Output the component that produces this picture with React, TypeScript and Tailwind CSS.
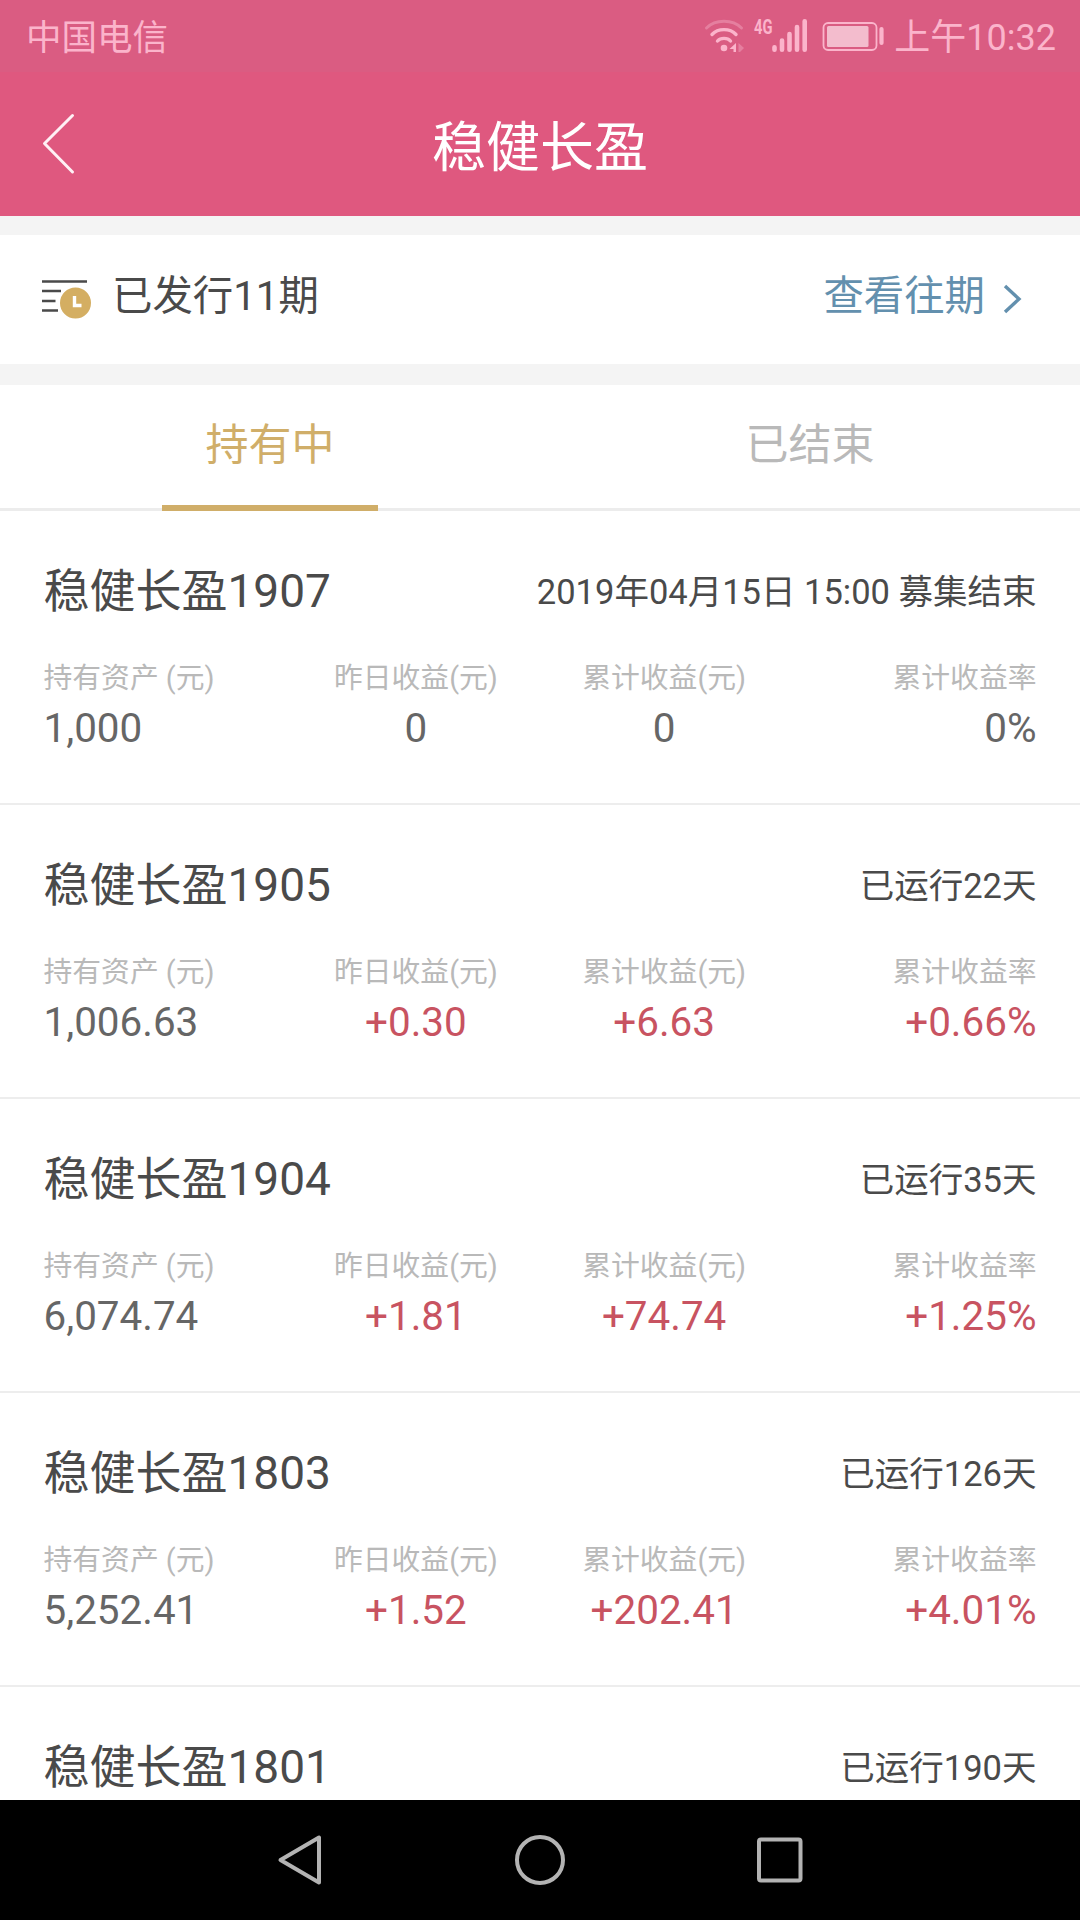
import { clsx } from 'clsx';

interface Holding {
  name: string;
  status: string;
  stats?: {
    assets: string;
    yesterday: string;
    total: string;
    rate: string;
  };
}

const holdings: Holding[] = [
  {
    name: '稳健长盈1907',
    status: '2019年04月15日 15:00 募集结束',
    stats: { assets: '1,000', yesterday: '0', total: '0', rate: '0%' },
  },
  {
    name: '稳健长盈1905',
    status: '已运行22天',
    stats: { assets: '1,006.63', yesterday: '+0.30', total: '+6.63', rate: '+0.66%' },
  },
  {
    name: '稳健长盈1904',
    status: '已运行35天',
    stats: { assets: '6,074.74', yesterday: '+1.81', total: '+74.74', rate: '+1.25%' },
  },
  {
    name: '稳健长盈1803',
    status: '已运行126天',
    stats: { assets: '5,252.41', yesterday: '+1.52', total: '+202.41', rate: '+4.01%' },
  },
  { name: '稳健长盈1801', status: '已运行190天' },
];

function StatusBar() {
  return (
    <div className="flex h-[72px] items-center justify-between bg-[#da5c82] pr-6 pl-[26px] text-[36px] leading-none text-[#fbb4cb]">
      <span className="pt-[5px] text-[35.500px]">中国电信</span>
      <div className="flex items-center">
        <svg width="190" height="72" viewBox="0 0 190 72" fill="none">
          {/* wifi */}
          <g strokeLinecap="round" strokeWidth="3.4">
            <path d="M3.500 28C12.500 19 29.500 19 38.500 28" stroke="#e57f9f" strokeWidth="3" />
            <path d="M9 34.500C15 28 27 28 33 34.500" stroke="#fbb4cb" />
            <path d="M14.500 41C17.500 37.500 24.500 37.500 27.500 41" stroke="#fbb4cb" />
          </g>
          <circle cx="21" cy="48" r="3.300" fill="#fbb4cb" />
          <path d="M33 43v9h-2.500v-3h-4z" fill="#fbb4cb" />
          <path d="M35.500 43l5.500 5-4 4h-1.500z" fill="#e57f9f" />
          <text x="51" y="34" fill="#fbb4cb" fontSize="21" fontWeight="700" textLength="18.500" lengthAdjust="spacingAndGlyphs">
            4G
          </text>
          {/* signal */}
          <path
            d="M71.500 47.300v2.400M79 40.500v9.200M86.500 34v15.700M94 27v22.700M101.700 21.300v28.400"
            stroke="#fbb4cb"
            strokeWidth="4.600"
            strokeLinecap="round"
          />
          {/* battery */}
          <rect x="120.500" y="23" width="53" height="27" rx="4.500" stroke="#fbb4cb" strokeWidth="1.800" />
          <rect x="124" y="26" width="41.500" height="21" rx="1.500" fill="#f3bccd" />
          <path d="M178.500 29v14" stroke="#fbb4cb" strokeWidth="4.200" strokeLinecap="round" />
        </svg>
        <span className="ml-px pt-1">上午10:32</span>
      </div>
    </div>
  );
}

function Header() {
  return (
    <header className="grid h-36 grid-cols-3 items-center bg-[#df587f] text-white">
      <svg className="ml-10" width="40" height="64" viewBox="0 0 40 64" fill="none" stroke="#fff0f5" strokeWidth="3" strokeLinecap="round" strokeLinejoin="round">
        <path d="M32.500 3.500L4.500 31.500L32.500 60" />
      </svg>
      <h1 className="pt-2.5 text-center text-[54px] leading-none">稳健长盈</h1>
    </header>
  );
}

function IssuedBar() {
  return (
    <div className="flex h-[129px] items-center justify-between bg-white pr-[57px] pl-[42px] text-[40.400px] leading-none">
      <div className="flex items-center text-[#4a4a4a]">
        <svg className="mr-5 mb-0.5" width="50" height="42" viewBox="0 0 50 42" fill="none">
          <path d="M0 3.500h45M0 13h19M0 23h13.500M0 32.500h16" stroke="#4a4a4a" strokeWidth="2.600" />
          <circle cx="33.500" cy="25" r="15.500" fill="#d4ae62" />
          <path d="M32.500 18v9.500h7" stroke="#fff" strokeWidth="3.400" />
        </svg>
        <span className="pb-[5px]">已发行11期</span>
      </div>
      <div className="flex items-center text-[#6390ae]">
        <span className="pb-[5px]">查看往期</span>
        <svg className="mb-0.5 ml-[18px]" width="20" height="30" viewBox="0 0 20 30" fill="none" stroke="#6390ae" strokeWidth="3.400">
          <path d="M2 2L16 15L2 28" />
        </svg>
      </div>
    </div>
  );
}

function Tabs() {
  return (
    <div className="flex h-[126px] border-b-[3px] border-[#ececec] bg-white text-[43px] leading-none">
      <div className="-mb-[3px] flex flex-1 flex-col items-center justify-between pt-[39px] text-[#d0ae69]">
        <span>持有中</span>
        <span className="h-1.5 w-[216px] bg-[#d0ae69]" />
      </div>
      <div className="flex flex-1 justify-center pt-[39px] text-[#b9b9b9]">
        <span>已结束</span>
      </div>
    </div>
  );
}

interface StatProps {
  label: string;
  value: string;
  align?: string;
}

function Stat({ label, value, align = 'text-center' }: StatProps) {
  return (
    <div className={clsx('whitespace-nowrap', align)}>
      <div className="text-[28.800px] leading-[40px] text-[#b9b9b9]">{label}</div>
      <div
        className={clsx(
          'mt-[7px] text-[40.400px] leading-[48px]',
          value.startsWith('+') ? 'text-[#c85361]' : 'text-[#666]'
        )}
      >
        {value}
      </div>
    </div>
  );
}

function HoldingCard({ item }: { item: Holding }) {
  const { name, status, stats } = item;

  return (
    <section className="h-[294px] shrink-0 border-b-2 border-[#ededed] bg-white px-[43.500px] pt-[53px]">
      <div className="flex h-[54px] items-center justify-between leading-none text-[#4a4a4a]">
        <h2 className="text-[46px]">{name}</h2>
        <span className="pt-0.5 text-[34.500px]">{status}</span>
      </div>
      {stats && (
        <div className="mt-10 grid grid-cols-4">
          <Stat label="持有资产 (元)" value={stats.assets} align="text-left" />
          <Stat label="昨日收益(元)" value={stats.yesterday} />
          <Stat label="累计收益(元)" value={stats.total} />
          <Stat label="累计收益率" value={stats.rate} align="text-right" />
        </div>
      )}
    </section>
  );
}

function NavBar() {
  return (
    <nav className="flex h-[120px] items-center justify-center bg-black">
      <svg width="540" height="60" viewBox="0 0 540 60" fill="none" stroke="#b3b3b3" strokeWidth="4" strokeLinejoin="round">
        <path d="M49 7.500V52.500L10.500 30z" />
        <circle cx="270" cy="30" r="23" />
        <rect x="489" y="9.500" width="41.500" height="41" rx="2" />
      </svg>
    </nav>
  );
}

export default function App() {
  return (
    <div className="flex h-[1920px] w-[1080px] flex-col overflow-hidden bg-[#f4f4f4] font-['Roboto','Noto_Sans_CJK_SC',sans-serif]" lang="zh-CN">
      <StatusBar />
      <Header />
      <div className="mt-[19px]">
        <IssuedBar />
      </div>
      <div className="mt-[21px]">
        <Tabs />
      </div>
      <main className="flex min-h-0 flex-1 flex-col overflow-hidden">
        {holdings.map((item) => (
          <HoldingCard key={item.name} item={item} />
        ))}
      </main>
      <NavBar />
    </div>
  );
}
